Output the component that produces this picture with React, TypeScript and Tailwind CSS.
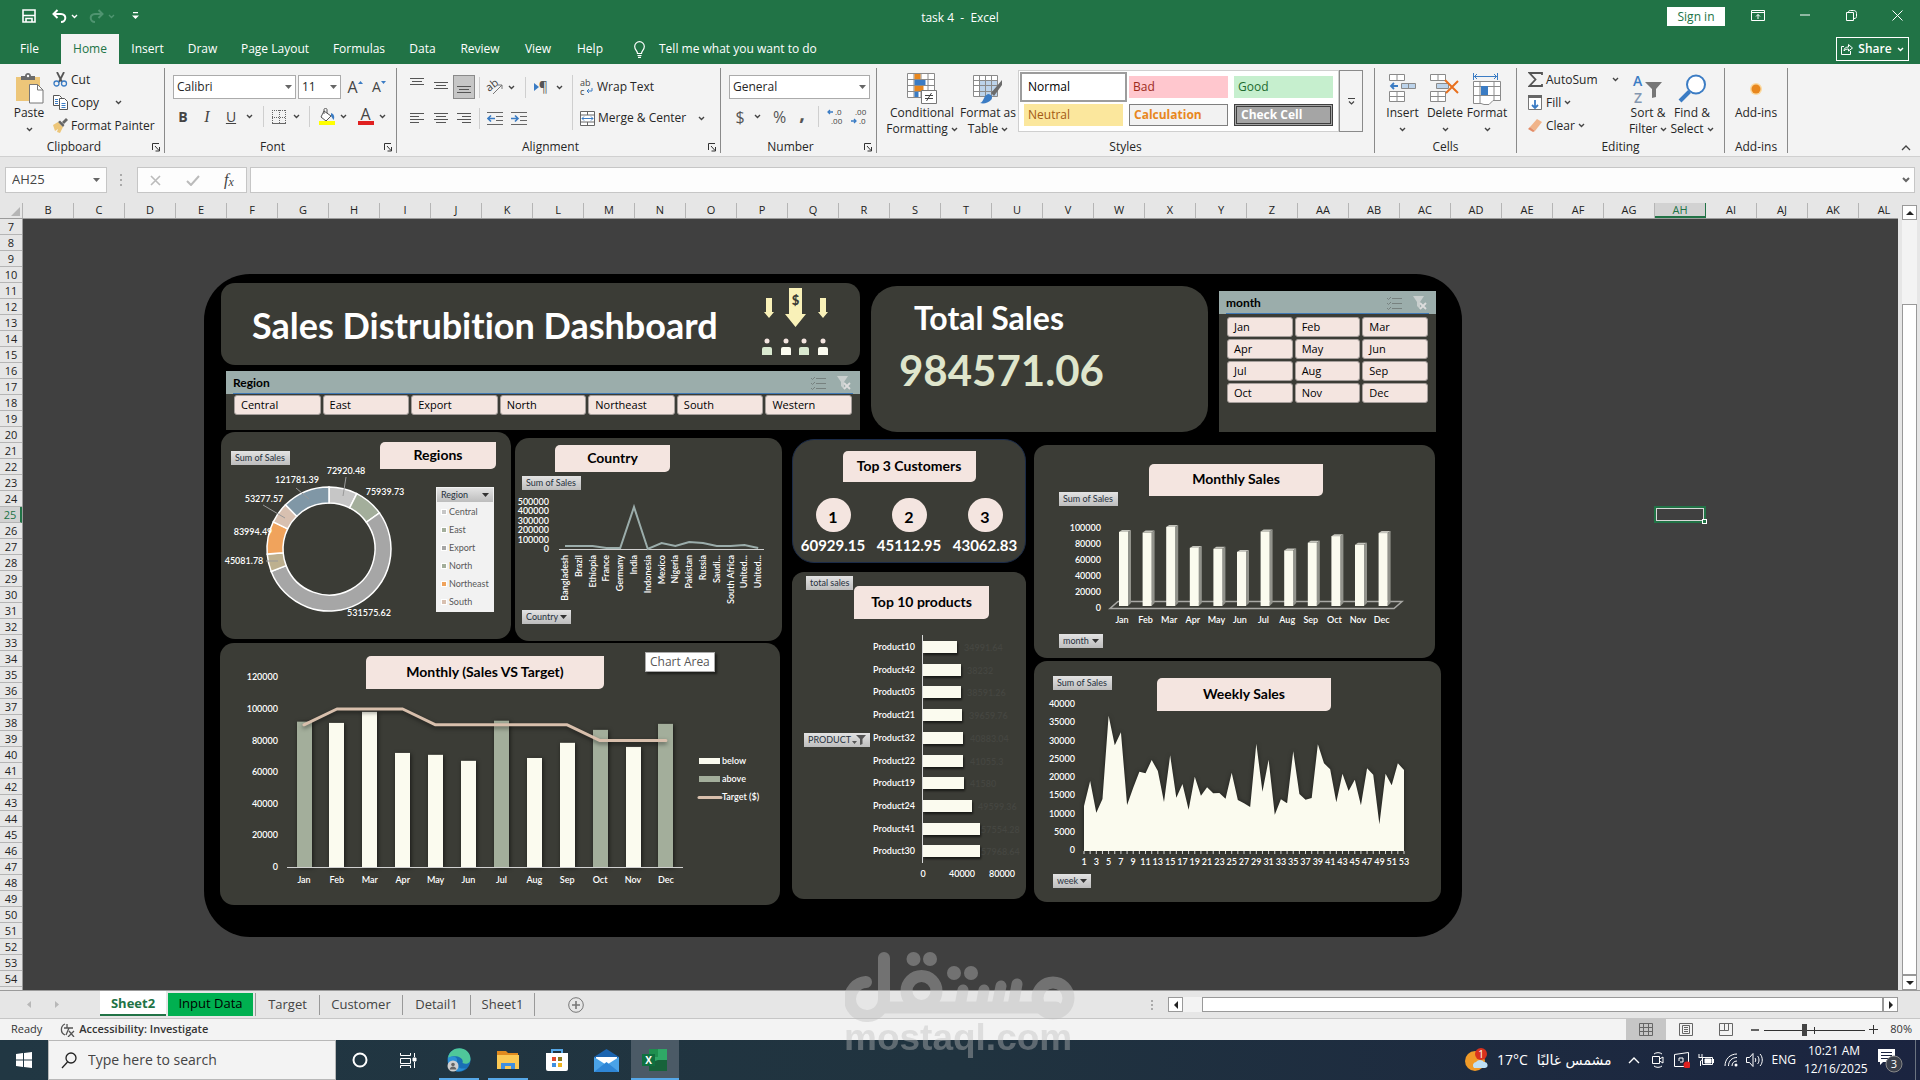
import React from "react";

type Kids = { children?: React.ReactNode };

const UI = "font-['Open_Sans','Noto_Sans',sans-serif]";
const CAL = "font-['Lato','Open_Sans',sans-serif] [font-variant-ligatures:none]";

/* ---------- small shared pieces ---------- */

function Chev({ color = "#444" }: { color?: string }) {
  return (
    <svg width="7" height="5" viewBox="0 0 7 5" className="shrink-0">
      <path d="M1 1l2.5 2.5L6 1" fill="none" stroke={color} strokeWidth="1.4" />
    </svg>
  );
}

function Tri({ color = "#666" }: { color?: string }) {
  return (
    <svg width="7" height="4" viewBox="0 0 7 4" className="shrink-0">
      <path d="M0 0h7L3.5 4z" fill={color} />
    </svg>
  );
}

function Btn({ label, className = "", children }: Kids & { label: string; className?: string }) {
  return (
    <button aria-label={label} className={`flex shrink-0 items-center justify-center ${className}`}>
      {children}
    </button>
  );
}

function Group({ title, width, launcher = false, children }: Kids & { title: string; width: string; launcher?: boolean }) {
  return (
    <section aria-label={title} className={`flex shrink-0 flex-col border-r border-[#8a8a8a] ${width}`}>
      <div className="h-[73px]">{children}</div>
      <div className="flex h-3 items-center text-center">
        <span className="flex-1 leading-3 whitespace-nowrap">{title}</span>
        {launcher && (
          <Btn label={`${title} settings`} className="w-4">
            <svg width="8" height="9" viewBox="0 0 8 9" fill="none" stroke="#333">
              <path d="M.5 7V.5H7M3 3l4 4.5M7.5 4v4H3.5" />
            </svg>
          </Btn>
        )}
      </div>
    </section>
  );
}

function Lines({ rows }: { rows: [number, number][] }) {
  return (
    <svg width="15" height="13" viewBox="0 0 15 13" stroke="#555" strokeWidth="1">
      {rows.map(([a, b], i) => (
        <path key={i} d={`M${a} ${i * 3 + 1.5}H${b}`} />
      ))}
    </svg>
  );
}

/* ---------- title bar & tabs ---------- */

function TitleBar() {
  return (
    <header className="grid h-[34px] grid-cols-[1fr_auto_1fr] bg-[#217346] text-white">
      <div className="flex items-start pl-[22px] pt-2">
        <Btn label="Save" className="h-4 w-[14px]">
          <svg width="14" height="14" viewBox="0 0 14 14" fill="none" stroke="#fff" strokeWidth="1.6">
            <path d="M1 1h12v12H1zM1 6.5h12M4 13V9.500h6V13" />
          </svg>
        </Btn>
        <Btn label="Undo" className="ml-[15px] h-4 w-4">
          <svg width="15" height="14" viewBox="0 0 15 14" fill="none" stroke="#fff" strokeWidth="2">
            <path d="M5.500 1L1.500 5l4 4M2 5h7c6 0 5.500 8 0 8" />
          </svg>
        </Btn>
        <Btn label="Undo history" className="ml-px h-4 w-3"><Chev color="#fff" /></Btn>
        <Btn label="Redo" className="ml-2 h-4 w-4">
          <svg width="15" height="14" viewBox="0 0 15 14" fill="none" stroke="#4f9470" strokeWidth="2">
            <path d="M9.500 1l4 4-4 4M13 5H6c-6 0-5.500 8 0 8" />
          </svg>
        </Btn>
        <Btn label="Redo history" className="ml-px h-4 w-3"><Chev color="#4f9470" /></Btn>
        <Btn label="Customize toolbar" className="ml-3 h-4 w-3">
          <svg width="7" height="8" viewBox="0 0 7 8" fill="#fff"><path d="M1 0h5v1.300H1zM0 3.500h7L3.500 7z" /></svg>
        </Btn>
      </div>
      <h1 className="pt-2 text-xs leading-5 whitespace-pre">task 4  -  Excel</h1>
      <div className="flex items-start justify-end">
        <button className="mt-[7px] h-[19px] w-[58px] bg-white text-xs leading-[19px] text-[#217346]">Sign in</button>
        <Btn label="Ribbon display options" className="ml-[18px] h-[30px] w-[30px]">
          <svg width="14" height="11" viewBox="0 0 14 11" fill="none" stroke="#fff">
            <path d="M.5.500h13v10H.5zM.5 2.500h13M7 9V4.500M5 6.500l2-2 2 2" />
          </svg>
        </Btn>
        <Btn label="Minimize" className="ml-[17px] h-[30px] w-[30px]">
          <svg width="10" height="2"><path d="M0 1h10" stroke="#fff" /></svg>
        </Btn>
        <Btn label="Restore" className="ml-4 h-[30px] w-[30px]">
          <svg width="11" height="11" viewBox="0 0 11 11" fill="none" stroke="#fff">
            <path d="M.5 2.500h7v8h-7zM2.500 2.500c0-1.500.5-2 2-2h3c2 0 3 1 3 3v3c0 1.500-1 2-2.500 2" />
          </svg>
        </Btn>
        <Btn label="Close" className="ml-4 mr-2 h-[30px] w-[30px]">
          <svg width="11" height="11" viewBox="0 0 11 11" stroke="#fff"><path d="M.5.500l10 10M10.500.500l-10 10" /></svg>
        </Btn>
      </div>
    </header>
  );
}

const TABS: [string, string][] = [
  ["File", "w-[59px] mr-[2px]"], ["Home", "w-[58px] bg-[#f3f3f3] text-[#217346]"], ["Insert", "w-[57px]"], ["Draw", "w-[53px]"],
  ["Page Layout", "w-[92px]"], ["Formulas", "w-[76px]"], ["Data", "w-[51px]"], ["Review", "w-[64px]"],
  ["View", "w-[52px]"], ["Help", "w-[52px]"],
];

function Tabs() {
  return (
    <nav className="flex h-[30px] items-stretch bg-[#217346] text-xs text-white">
      {TABS.map(([t, c]) => (
        <button key={t} className={`shrink-0 ${c}`}>{t}</button>
      ))}
      <button className="ml-[18px] flex items-center gap-[14px]">
        <svg width="11" height="17" viewBox="0 0 11 17" fill="none" stroke="#fff" strokeWidth="1.200">
          <path d="M3.500 12.500c0-3-2.800-3.500-2.800-7a4.800 4.800 0 0 1 9.600 0c0 3.500-2.800 4-2.800 7zM3.500 14.500h4M4 16.300h3" />
        </svg>
        <span>Tell me what you want to do</span>
      </button>
      <button className="mr-[11px] mb-[3px] mt-[3px] ml-auto flex w-[73px] items-center justify-between border border-white px-1 font-semibold">
        <svg width="12" height="12" viewBox="0 0 12 12" fill="none" stroke="#fff">
          <path d="M3 3.500H.5v8h9V8M3 8c0-3 2-4 4.500-4V1.500L11.500 5 7.500 8V6C5.500 6 4 6.500 3 8z" />
        </svg>
        Share
        <Chev color="#fff" />
      </button>
    </nav>
  );
}

/* ---------- ribbon ---------- */

function PasteIcon() {
  return (
    <svg width="29" height="31" viewBox="0 0 29 31">
      <path d="M1 4h24v24H1z" fill="#edc679" />
      <path d="M6 3h4c0-4 6-4 6 0h4v4H6z" fill="#6b6b6b" /><circle cx="13" cy="3" r="1.200" fill="#fff" />
      <path d="M14.500 11.500h8l5.500 5.500v13H14.500z" fill="#fff" stroke="#777" /><path d="M22.500 11.500V17H28" fill="none" stroke="#777" />
    </svg>
  );
}

function BigButton({ label, lines, className = "", inline = false, children }: Kids & { label: string; lines: string[]; className?: string; inline?: boolean }) {
  return (
    <button aria-label={label} className={`flex shrink-0 flex-col items-center leading-4 ${className}`}>
      <span className="flex h-[33px] items-center justify-center">{children}</span>
      {lines.map((l, i) => (
        <span key={l} className="flex items-center gap-[3px] whitespace-nowrap">
          {l}
          {inline && i === lines.length - 1 && <Chev />}
        </span>
      ))}
      {!inline && label !== "Add-ins" && <span className="flex h-4 items-center"><Chev /></span>}
    </button>
  );
}

function Clipboard() {
  return (
    <Group title="Clipboard" width="w-[165px]" launcher>
      <div className="flex">
        <BigButton label="Paste" lines={["Paste"]} className="ml-2 mt-1 w-[42px]"><PasteIcon /></BigButton>
        <div className="ml-[3px] flex flex-col">
          <button className="flex h-[23px] items-center gap-[3px]">
            <svg width="15" height="15" viewBox="0 0 15 15" fill="none">
              <path d="M4 0l5 10M11 0L6 10" stroke="#555" strokeWidth="1.800" />
              <circle cx="3.500" cy="11.500" r="2.500" stroke="#3b7cc4" strokeWidth="1.300" /><circle cx="11" cy="11.500" r="2.500" stroke="#3b7cc4" strokeWidth="1.300" />
            </svg>
            Cut
          </button>
          <button className="flex h-[23px] items-center gap-[3px]">
            <svg width="15" height="15" viewBox="0 0 15 15" fill="#fff" stroke="#555">
              <path d="M.5.500h6l2 2v8h-8z" /><path d="M6.500 3.500h5l3 3v8h-8z" /><path d="M2 4.500h3M2 6.500h3M2 8.500h3M8.500 8.500h4M8.500 10.500h4M8.500 12.500h4" stroke="#3b7cc4" />
            </svg>
            Copy
            <span className="ml-[13px]"><Chev /></span>
          </button>
          <button className="flex h-[23px] items-center gap-[3px] whitespace-nowrap">
            <svg width="15" height="15" viewBox="0 0 15 15">
              <path d="M0 7l5-3 5 5-3 6-3-1 1-3-3 2z" fill="#edc679" /><path d="M5 4l2-1.500L11.500 7 10 9zM9 4l4-4 2 2-4 4z" fill="#666" />
            </svg>
            Format Painter
          </button>
        </div>
      </div>
    </Group>
  );
}

function Sep() {
  return <span className="block h-[21px] w-px shrink-0 bg-[#cfcfcf]" />;
}

function FontGroup() {
  return (
    <Group title="Font" width="w-[232px]" launcher>
      <div className="flex flex-col pl-2 pt-[7px]">
        <div className="flex items-center">
          <button aria-label="Font name" className="flex h-6 w-[123px] items-center justify-between border border-[#ababab] bg-white px-[3px] text-xs">Calibri<Tri /></button>
          <button aria-label="Font size" className="ml-[2px] flex h-6 w-[43px] items-center justify-between border border-[#ababab] bg-white px-[3px] text-xs">11<Tri /></button>
          <Btn label="Increase font size" className="ml-[6px] w-4 text-base text-[#444]">A<svg width="5" height="12" viewBox="0 0 5 12"><path d="M0 3l2.500-3L5 3z" fill="#3b7cc4" /></svg></Btn>
          <Btn label="Decrease font size" className="ml-2 w-4 text-sm text-[#444]">A<svg width="5" height="12" viewBox="0 0 5 12"><path d="M0 0h5L2.500 3z" fill="#3b7cc4" /></svg></Btn>
        </div>
        <div className="mt-[7px] flex h-[21px] items-center text-sm text-[#444]">
          <Btn label="Bold" className="w-5 font-bold">B</Btn>
          <Btn label="Italic" className="ml-1 w-5 font-['Liberation_Serif',serif] text-base italic">I</Btn>
          <Btn label="Underline" className="ml-1 w-5 underline">U</Btn>
          <Btn label="Underline style" className="w-4"><Chev /></Btn>
          <span className="ml-[6px]"><Sep /></span>
          <Btn label="Borders" className="ml-[7px] w-[15px]">
            <svg width="14" height="14" viewBox="0 0 14 14" stroke="#666" strokeDasharray="1 1"><path d="M.5 0v14M13.500 0v14M7.500 0v14M0 .500h14M0 7.500h14" /><path d="M0 13.500h14" strokeDasharray="none" /></svg>
          </Btn>
          <Btn label="Border style" className="ml-[2px] w-4"><Chev /></Btn>
          <span className="ml-[5px]"><Sep /></span>
          <Btn label="Fill color" className="ml-2 w-[17px]">
            <svg width="16" height="17" viewBox="0 0 16 17"><path d="M5 3l7 5-5 5-5-4z" fill="#fff" stroke="#555" /><path d="M5 6V1.500c0-1.500 3-1.500 3 0V5" fill="none" stroke="#555" /><path d="M12 5c3 1 4 4 2.500 7L12 8z" fill="#3b7cc4" /><path d="M0 13h16v4H0z" fill="#ff0" /></svg>
          </Btn>
          <Btn label="Fill colors" className="w-4"><Chev /></Btn>
          <Btn label="Font color" className="ml-[6px] w-[17px]">
            <span className="flex flex-col items-center leading-[13px] text-base">A<span className="h-1 w-4 bg-[#e02020]" /></span>
          </Btn>
          <Btn label="Font colors" className="w-4"><Chev /></Btn>
        </div>
      </div>
    </Group>
  );
}

function AlignmentGroup() {
  return (
    <Group title="Alignment" width="w-[324px]" launcher>
      <div className="flex pl-2 pt-[7px]">
        <div className="w-[167px] shrink-0">
          <div className="flex h-6 items-center">
            <Btn label="Top align" className="w-6 pb-2"><Lines rows={[[0, 14], [2, 12], [0, 14]]} /></Btn>
            <Btn label="Middle align" className="w-6"><Lines rows={[[0, 14], [2, 12], [0, 14]]} /></Btn>
            <Btn label="Bottom align" className="h-6 w-[22px] border border-[#8a8a8a] bg-[#c6c6c6] pt-2"><Lines rows={[[0, 14], [2, 12], [0, 14]]} /></Btn>
            <span className="ml-1"><Sep /></span>
            <Btn label="Orientation" className="ml-[7px] w-4">
              <svg width="17" height="16" viewBox="0 0 17 16" className="overflow-visible"><text x="0" y="11" fontSize="11" fill="#444" transform="rotate(-38 4 9)">ab</text><path d="M6 15L15 6M11 6h4v4" stroke="#777" fill="none" /></svg>
            </Btn>
            <Btn label="Orientation options" className="w-4"><Chev /></Btn>
            <span className="ml-[6px]"><Sep /></span>
            <Btn label="Text direction" className="ml-2 w-[14px] text-sm text-[#555]"><svg width="5" height="8"><path d="M0 0v8l5-4z" fill="#3b7cc4" /></svg>¶</Btn>
            <Btn label="Direction options" className="ml-[3px] w-4"><Chev /></Btn>
          </div>
          <div className="mt-[7px] flex h-6 items-center">
            <Btn label="Align left" className="w-6"><Lines rows={[[0, 14], [0, 9], [0, 14], [0, 9]]} /></Btn>
            <Btn label="Center" className="w-6"><Lines rows={[[0, 14], [2, 12], [0, 14], [2, 12]]} /></Btn>
            <Btn label="Align right" className="w-[22px]"><Lines rows={[[0, 14], [5, 14], [0, 14], [5, 14]]} /></Btn>
            <span className="ml-1"><Sep /></span>
            <Btn label="Decrease indent" className="ml-[7px] w-4">
              <svg width="16" height="13" viewBox="0 0 16 13" fill="none" stroke="#666"><path d="M0 .500h16M9 4.500h7M9 8.500h7M0 12.500h16" /><path d="M8 6.500H1M4 3.500l-3 3 3 3" stroke="#3b7cc4" strokeWidth="1.600" /></svg>
            </Btn>
            <Btn label="Increase indent" className="ml-2 w-4">
              <svg width="16" height="13" viewBox="0 0 16 13" fill="none" stroke="#666"><path d="M0 .500h16M9 4.500h7M9 8.500h7M0 12.500h16" /><path d="M0 6.500h7M4 3.500l3 3-3 3" stroke="#3b7cc4" strokeWidth="1.600" /></svg>
            </Btn>
          </div>
        </div>
        <div className="flex flex-1 flex-col gap-[7px] border-l border-[#cfcfcf] pl-[7px]">
          <button className="flex h-6 items-center gap-[3px]">
            <svg width="14" height="18" viewBox="0 0 14 18" className="overflow-visible text-[9px] leading-none"><text x="0" y="8" fill="#444">ab</text><text x="0" y="17" fill="#444">c</text><path d="M12 10v3H7M9 11l-2 2 2 2" stroke="#3b7cc4" fill="none" /></svg>
            Wrap Text
          </button>
          <button className="flex h-6 items-center gap-[3px] whitespace-nowrap">
            <svg width="15" height="15" viewBox="0 0 15 15" fill="#fff" stroke="#666"><path d="M.5.500h14v14H.5zM.5 4h14M.5 11h14M7.500.500V4M7.500 11v3.500" /><path d="M2 7.500h11M4 5.500l-2 2 2 2M11 5.500l2 2-2 2" stroke="#3b7cc4" fill="none" /></svg>
            Merge &amp; Center
            <span className="ml-[9px]"><Chev /></span>
          </button>
        </div>
      </div>
    </Group>
  );
}

function DecIcon({ inc }: { inc: boolean }) {
  return (
    <svg width="15" height="17" viewBox="0 0 15 17" className="overflow-visible text-[8px]" fill="#444">
      <text x={inc ? 8 : 4} y="7">{inc ? ".0" : ".00"}</text>
      <text x={inc ? 4 : 8} y="16">{inc ? ".00" : ".0"}</text>
      <path d={inc ? "M6 4H1M3 2L1 4l2 2" : "M0 13h5M3 11l2 2-2 2"} stroke="#3b7cc4" fill="none" strokeWidth="1.300" />
    </svg>
  );
}

function NumberGroup() {
  return (
    <Group title="Number" width="w-[156px]" launcher>
      <div className="pl-2 pt-[7px]">
        <button aria-label="Number format" className="flex h-6 w-[141px] items-center justify-between border border-[#ababab] bg-white px-[3px]">General<Tri /></button>
        <div className="mt-[7px] flex h-[21px] items-center text-base text-[#555]">
          <Btn label="Accounting" className="ml-[5px] w-3">$</Btn>
          <Btn label="Accounting options" className="ml-[3px] w-4"><Chev /></Btn>
          <Btn label="Percent" className="ml-[7px] w-[15px]">%</Btn>
          <Btn label="Comma style" className="ml-[9px] w-3 pb-2 text-xl font-bold">,</Btn>
          <span className="ml-[10px]"><Sep /></span>
          <Btn label="Increase decimal" className="ml-[7px] w-4"><DecIcon inc /></Btn>
          <Btn label="Decrease decimal" className="ml-2 w-4"><DecIcon inc={false} /></Btn>
        </div>
      </div>
    </Group>
  );
}

const STYLES: [string, string][] = [
  ["Normal", "bg-white text-black outline-2 outline-[#9c9c9c] outline-offset-2"],
  ["Bad", "bg-[#ffc7ce] text-[#9c2a1a]"],
  ["Good", "bg-[#c6efce] text-[#1d6b2f]"],
  ["Neutral", "bg-[#fbe79d] text-[#a35a14]"],
  ["Calculation", "border border-[#7f7f7f] bg-[#f2f2f2] font-bold text-[#e8871e]"],
  ["Check Cell", "border-3 border-double border-[#3f3f3f] bg-[#a5a5a5] font-bold text-white"],
];

function StylesGroup() {
  return (
    <Group title="Styles" width="w-[498px]">
      <div className="flex pt-[2px]">
        <BigButton label="Conditional Formatting" lines={["Conditional", "Formatting"]} inline className="ml-[7px] mt-[2px] w-[76px]">
          <svg width="30" height="31" viewBox="0 0 30 31">
            <path d="M.5.500h27v24H.5zM7 .500v24M14 .500v24M21 .500v24M.5 6.500h27M.5 12.500h27M.5 18.500h27" fill="#fff" stroke="#8a8a8a" />
            <path d="M7.500 1h6v5h-6zM7.500 13h9v5h-9z" fill="#e8871e" /><path d="M7.500 7h11v5h-11zM7.500 19h4v5h-4z" fill="#3b7cc4" />
            <path d="M14.500 17.500h15v13h-15z" fill="#fff" stroke="#777" /><path d="M18 22.500h8M18 25.500h8M24.500 20l-5 8" stroke="#444" />
          </svg>
        </BigButton>
        <BigButton label="Format as Table" lines={["Format as", "Table"]} inline className="mt-[2px] w-[56px]">
          <svg width="30" height="31" viewBox="0 0 30 31">
            <path d="M.5 2.500h24v21H.5z" fill="#fff" stroke="#8a8a8a" /><path d="M7 8h17v15H7z" fill="#bcd3ea" />
            <path d="M6.500 2.500v21M12.500 2.500v21M18.500 2.500v21M.5 7.500h24M.5 12.500h24M.5 18.500h24" stroke="#8a8a8a" />
            <path d="M29 7L18 20l3 3 8-11z" fill="#6b6b6b" /><path d="M7 30c4-1 3-7 8-9 4 0 5 4 3 6-3 3-7 4-11 3z" fill="#3b7cc4" />
          </svg>
        </BigButton>
        <div className="ml-[2px] grid h-[62px] flex-1 grid-cols-3 content-center gap-x-[6px] gap-y-[6px] border border-[#cfcfcf] bg-white px-[5px]">
          {STYLES.map(([n, c]) => (
            <button key={n} className={`flex h-[22px] items-center px-1 ${c}`}>{n}</button>
          ))}
        </div>
        <Btn label="More styles" className="mr-[11px] h-[62px] w-6 border border-[#8a8a8a]">
          <svg width="7" height="7" viewBox="0 0 7 7"><path d="M0 .500h7M1 3.500L3.500 6 6 3.500" fill="none" stroke="#444" strokeWidth="1.200" /></svg>
        </Btn>
      </div>
    </Group>
  );
}

function CellsGroup() {
  return (
    <Group title="Cells" width="w-[142px]">
      <div className="flex pl-[6px] pt-1">
        <BigButton label="Insert" lines={["Insert"]} className="w-[43px]">
          <svg width="27" height="29" viewBox="0 0 27 29" fill="#fff" stroke="#8a8a8a">
            <path d="M.5.500h15v6H.5zM8 .500v6M.5 17.500h15v10H.5zM8 17.500v10M.5 22.500h15" /><path d="M12.500 9.500h14v5h-14zM19.500 9.500v5" fill="#bcd3ea" /><path d="M9 12H2M5 9l-3 3 3 3" stroke="#3b7cc4" strokeWidth="1.800" fill="none" />
          </svg>
        </BigButton>
        <BigButton label="Delete" lines={["Delete"]} className="w-[42px]">
          <svg width="30" height="29" viewBox="0 0 30 29" fill="#fff" stroke="#8a8a8a">
            <path d="M.5.500h15v6H.5zM8 .500v6M.5 17.500h15v10H.5zM8 17.500v10M.5 22.500h15" /><path d="M6.500 9.500h12v5h-12z" fill="#bcd3ea" /><path d="M15 6l13 13M28 7L16 19" stroke="#e8701e" strokeWidth="2" />
          </svg>
        </BigButton>
        <BigButton label="Format" lines={["Format"]} className="w-[42px]">
          <svg width="29" height="32" viewBox="0 0 29 32" fill="#fff" stroke="#8a8a8a">
            <path d="M.5 8.500h27v19H20l-4 4h-5l-3-1H.500zM7 8.500v22M21 8.500v19M.5 13.500h27M.5 22.500h27" /><path d="M8 13h7v9H8z" fill="#3b7cc4" stroke="none" /><path d="M1 3.500h23M4 1L1.500 3.500 4 6M21 1l2.500 2.500L21 6M.5 0v7M24.500 0v7" stroke="#3b7cc4" fill="none" />
          </svg>
        </BigButton>
      </div>
    </Group>
  );
}

function EditingGroup() {
  return (
    <Group title="Editing" width="w-[208px]">
      <div className="flex pl-[11px]">
        <div className="flex w-[99px] shrink-0 flex-col">
          <button className="flex h-[23px] items-center gap-[3px]">
            <svg width="15" height="15" viewBox="0 0 15 15" fill="none" stroke="#555" strokeWidth="1.800"><path d="M14 3V1H1.500l6 6.500-6 6.500H14v-2" /></svg>
            AutoSum<span className="ml-auto mr-2"><Chev /></span>
          </button>
          <button className="flex h-[23px] items-center gap-[3px]">
            <svg width="15" height="15" viewBox="0 0 15 15"><path d="M.5.500h13v14H.5z" fill="#fff" stroke="#777" /><path d="M0 0h14v3H0z" fill="#666" /><path d="M7 5v8M4 10l3 3 3-3" stroke="#3b7cc4" strokeWidth="1.800" fill="none" /></svg>
            Fill<Chev />
          </button>
          <button className="flex h-[23px] items-center gap-[3px]">
            <svg width="15" height="15" viewBox="0 0 15 15"><path d="M9 1l5 3-7 9-5-4z" fill="#f0b48a" /><path d="M2 9l5 4-2 1-5-3z" fill="#e48c66" /></svg>
            Clear<Chev />
          </button>
        </div>
        <BigButton label="Sort & Filter" lines={["Sort &", "Filter"]} inline className="mt-1 w-[42px]">
          <svg width="30" height="32" viewBox="0 0 30 32" className="overflow-visible text-sm font-semibold"><text x="0" y="13" fill="#3b7cc4">A</text><text x="1" y="30" fill="#8497b0">Z</text><path d="M12 9h17l-6 7v8l-4 1v-9z" fill="#777" /></svg>
        </BigButton>
        <BigButton label="Find & Select" lines={["Find &", "Select"]} inline className="mt-1 w-[46px]">
          <svg width="29" height="29" viewBox="0 0 29 29" fill="none" stroke="#3b7cc4"><circle cx="18" cy="10.500" r="9" strokeWidth="2" fill="#fff" /><path d="M11.500 17.500L2 27" strokeWidth="4" /></svg>
        </BigButton>
      </div>
    </Group>
  );
}

function Ribbon() {
  return (
    <div className="flex h-[93px] items-start border-b border-[#d0d0d0] bg-[#f3f3f3] pt-1 text-xs text-[#262626]">
      <Clipboard />
      <FontGroup />
      <AlignmentGroup />
      <NumberGroup />
      <StylesGroup />
      <CellsGroup />
      <EditingGroup />
      <Group title="Add-ins" width="w-[63px]">
        <BigButton label="Add-ins" lines={["Add-ins"]} className="mx-auto mt-1">
          <svg width="14" height="14" viewBox="0 0 14 14"><circle cx="7" cy="7" r="6" fill="#fbd9a0" /><circle cx="7" cy="7" r="4.500" fill="#e8871e" /></svg>
        </BigButton>
      </Group>
      <Btn label="Collapse ribbon" className="ml-auto mr-2 mt-[72px] h-4 w-3">
        <svg width="10" height="6" viewBox="0 0 10 6"><path d="M1 5l4-4 4 4" fill="none" stroke="#444" strokeWidth="1.300" /></svg>
      </Btn>
    </div>
  );
}

function FormulaBar() {
  return (
    <div className="flex h-[46px] items-start bg-[#e6e6e6] pt-[10px] pl-[5px] text-[#444]">
      <div className="flex h-[26px] w-[102px] shrink-0 items-center justify-between border border-[#c6c6c6] bg-[#fdfdfd] px-[6px] text-[13px]">
        <input aria-label="Name box" defaultValue="AH25" className="w-16 bg-transparent outline-none" />
        <Tri />
      </div>
      <span className="mx-[13px] flex h-[26px] flex-col items-center justify-center gap-[3px]">
        <i className="h-[2px] w-[2px] bg-[#aaa]" /><i className="h-[2px] w-[2px] bg-[#aaa]" /><i className="h-[2px] w-[2px] bg-[#aaa]" />
      </span>
      <div className="ml-[2px] flex h-[26px] w-[110px] shrink-0 items-center justify-around border border-[#c6c6c6] bg-[#fdfdfd]">
        <Btn label="Cancel"><svg width="11" height="11"><path d="M1 1l9 9M10 1l-9 9" stroke="#bbb" strokeWidth="1.600" /></svg></Btn>
        <Btn label="Enter"><svg width="14" height="11"><path d="M1 6l4 4 8-9" stroke="#bbb" strokeWidth="2" fill="none" /></svg></Btn>
        <Btn label="Insert function" className="font-['Liberation_Serif',serif] text-base leading-5 italic text-[#444]">f<span className="pt-1 text-xs">x</span></Btn>
      </div>
      <div className="mr-[5px] ml-[3px] flex h-[26px] flex-1 items-center border border-[#c6c6c6] bg-[#fdfdfd] pr-1">
        <input aria-label="Formula bar" className="flex-1 bg-transparent px-1 text-[13px] outline-none" />
        <svg width="8" height="6" viewBox="0 0 8 6"><path d="M1 1l3 3 3-3" fill="none" stroke="#666" strokeWidth="2" /></svg>
      </div>
    </div>
  );
}

/* ---------- dashboard ---------- */

const PANEL = "relative shrink-0 bg-[#3b3c36]";

function Pill({ className, children }: Kids & { className: string }) {
  return (
    <h3 className={`flex items-center justify-center rounded-tl-[5px] rounded-br-[5px] bg-[#f4e5e0] pb-[2px] text-sm font-bold text-black ${className}`}>
      {children}
    </h3>
  );
}

function Field({ className, arrow = false, children }: Kids & { className: string; arrow?: boolean }) {
  return (
    <button className={`flex h-[14px] items-center justify-between bg-linear-to-b from-[#e3e3e3] to-[#bdbdbd] px-1 text-[9px] leading-[14px] whitespace-nowrap text-[#26303c] ${className}`}>
      {children}
      {arrow && <Tri color="#333" />}
    </button>
  );
}

function Slicer({ title, items, cols, className }: { title: string; items: string[]; cols: string; className: string }) {
  return (
    <section aria-label={title} className={`shrink-0 bg-[#3b3c36] ${className}`}>
      <div className="flex h-[23px] items-end bg-[#9badab] px-[7px]">
        <div className="flex h-[21px] flex-1 items-center border-b border-[#3f78b5]">
          <h3 className={`text-xs font-bold text-black ${CAL}`}>{title}</h3>
          <Btn label="Multi-select" className="ml-auto">
            <svg width="15" height="14" viewBox="0 0 15 14" fill="none" stroke="#77817f"><path d="M5 2.500h10M5 7.500h10M5 12.500h10M0 2l1.500 1.500L4 1M0 7l1.500 1.500L4 6M0 12l1.500 1.500L4 11" /></svg>
          </Btn>
          <Btn label="Clear filter" className="ml-[10px] mr-[2px]">
            <svg width="15" height="14" viewBox="0 0 15 14" fill="#c9cfce"><path d="M1 0h11L8 6v7L5 10V6z" /><path d="M8 7l6 6M14 7l-6 6" stroke="#dcdcdc" strokeWidth="1.800" /></svg>
          </Btn>
        </div>
      </div>
      <div className={`grid gap-[2px] px-2 ${cols}`}>
        {items.map((m) => (
          <button key={m} className={`h-5 rounded-[3px] border border-[#a59e9b] bg-[#f4e5e0] px-[6px] text-left text-[11px] leading-[18px] text-black ${UI}`}>{m}</button>
        ))}
      </div>
    </section>
  );
}

const MONTHS = ["Jan", "Feb", "Mar", "Apr", "May", "Jun", "Jul", "Aug", "Sep", "Oct", "Nov", "Dec"];
const SALES = [92000, 91200, 98200, 72200, 71000, 67200, 92600, 69000, 78600, 86800, 76000, 90600];
const TARGET = [90000, 100000, 100000, 100000, 90000, 90000, 90000, 90000, 90000, 80000, 80000, 80000];

function Axis({ x, ys, labels }: { x: number; ys: number[]; labels: string[] }) {
  return (
    <g textAnchor="end">
      {labels.map((l, i) => (
        <text key={i} x={x} y={ys[i]}>{l}</text>
      ))}
    </g>
  );
}

const CHART = "block fill-white text-[9px] font-['Lato','Open_Sans',sans-serif] font-semibold";

const SLICES: [number, string][] = [
  [72920.48, "#c6c6c6"], [75939.73, "#a3ae9b"], [531575.62, "#a6a6a6"], [45081.78, "#bdb08f"],
  [83994.49, "#f0a35c"], [53277.57, "#d8c0b0"], [121781.39, "#8097a6"],
];
const SLICE_LABELS: [number, number, string][] = [
  [346, 474, "72920.48"], [297, 483, "121781.39"], [264, 502, "53277.57"], [385, 495, "75939.73"],
  [253, 535, "83994.49"], [244, 564, "45081.78"], [369, 616, "531575.62"],
];

function RegionsPanel() {
  const total = SLICES.reduce((s, [v]) => s + v, 0);
  const cx = 329, cy = 549, R = 62, r = 46;
  let a = -Math.PI / 2;
  return (
    <section className={`${PANEL} rounded-[14px]`}>
      <svg width="290" height="207" viewBox="221 432 290 207" className={CHART}>
        {SLICES.map(([v, c], i) => {
          const b = a + (v / total) * Math.PI * 2;
          const big = b - a > Math.PI ? 1 : 0;
          const p = (k: number, t: number) => `${cx + k * Math.cos(t)} ${cy + k * Math.sin(t)}`;
          const d = `M${p(R, a)}A${R} ${R} 0 ${big} 1 ${p(R, b)}L${p(r, b)}A${r} ${r} 0 ${big} 0 ${p(r, a)}Z`;
          a = b;
          return <path key={i} d={d} fill={c} stroke="#fff" strokeWidth="1.500" />;
        })}
        <path d="M346 477l-3 19M296 488l13 11M263 505l22 13M266 561h12" stroke="#999" fill="none" />
        {SLICE_LABELS.map(([x, y, t]) => (
          <text key={t} x={x} y={y} textAnchor="middle">{t}</text>
        ))}
      </svg>
      <Pill className="absolute left-[159px] top-[10px] h-[27px] w-[116px]">Regions</Pill>
      <Field className="absolute left-[10px] top-[19px] w-[59px]">Sum of Sales</Field>
      <div className="absolute left-[215px] top-[55px] w-[58px] bg-[#f2f2f2] p-px text-[9px] text-[#595959]">
        <Field arrow className="w-full">Region</Field>
        <ul className="pt-px">
          {[["Central", "bg-[#c6c6c6]"], ["East", "bg-[#a3ae9b]"], ["Export", "bg-[#a6a6a6]"], ["North", "bg-[#a3ae9b]"], ["Northeast", "bg-[#f0a35c]"], ["South", "bg-[#d8c0b0]"]].map(([n, c]) => (
            <li key={n} className="flex h-[18px] items-center gap-[2px] pl-[4px]">
              <i className={`h-[6px] w-[6px] shrink-0 border border-white ${c}`} />
              {n}
            </li>
          ))}
        </ul>
      </div>
    </section>
  );
}

const COUNTRIES = ["Bangladesh", "Brazil", "Ethiopia", "France", "Germany", "India", "Indonesia", "Mexico", "Nigeria", "Pakistan", "Russia", "Saudi...", "South Africa", "United...", "United..."];
const COUNTRY_Y = [546, 546, 546, 548, 548, 507, 549, 543, 546, 542, 543, 546, 546, 545, 548];

function CountryPanel() {
  const x = (i: number) => 565 + i * 13.8;
  return (
    <section className={`${PANEL} mt-[6px] rounded-[14px]`}>
      <svg width="267" height="203" viewBox="515 438 267 203" className={CHART}>
        <Axis x={549} ys={[505, 514, 524, 533, 543, 552]} labels={["500000", "400000", "300000", "200000", "100000", "0"]} />
        <path d="M559 549.500h205" stroke="#d0d0d0" />
        <polyline points={COUNTRY_Y.map((y, i) => `${x(i)},${y}`).join(" ")} fill="none" stroke="#9badab" strokeWidth="2" />
        {COUNTRIES.map((c, i) => (
          <text key={i} textAnchor="end" transform={`translate(${x(i) + 3} 555) rotate(-90)`}>{c}</text>
        ))}
      </svg>
      <Pill className="absolute left-[40px] top-[7px] h-[27px] w-[115px]">Country</Pill>
      <Field className="absolute left-[7px] top-[38px] w-[59px]">Sum of Sales</Field>
      <Field arrow className="absolute left-[7px] top-[172px] w-[49px]">Country</Field>
    </section>
  );
}

function TargetPanel() {
  const x = (i: number) => 304 + i * 32.9;
  const y = (v: number) => 867 - (v * 158) / 100000;
  const above = [0, 6, 9, 11];
  return (
    <section className={`${PANEL} rounded-[14px]`}>
      <svg width="560" height="262" viewBox="220 643 560 262" className={CHART}>
        <Axis x={278} ys={[680, 712, 744, 775, 807, 838, 870]} labels={["120000", "100000", "80000", "60000", "40000", "20000", "0"]} />
        <g className="drop-shadow-[1px_1px_2px_rgba(0,0,0,0.6)]">
          {SALES.map((v, i) => (
            <rect key={i} x={Math.round(x(i) - 7.5)} width="15" y={y(v)} height={867 - y(v)} fill={above.includes(i) ? "#a3ae9b" : "#fbfbef"} />
          ))}
        </g>
        <path d="M287 867.500h396" stroke="#d0d0d0" />
        <polyline className="drop-shadow-[0_2px_2px_rgba(0,0,0,0.5)]" points={TARGET.map((v, i) => `${x(i)},${y(v)}`).join(" ")} fill="none" stroke="#d8bfac" strokeWidth="3" strokeLinecap="round" strokeLinejoin="round" />
        <g textAnchor="middle">
          {MONTHS.map((m, i) => <text key={m} x={x(i)} y="883">{m}</text>)}
        </g>
        <rect x="699" y="758" width="21" height="6" fill="#fbfbef" /><rect x="699" y="776" width="21" height="6" fill="#a3ae9b" />
        <path d="M699 797.500h22" stroke="#d8bfac" strokeWidth="3" strokeLinecap="round" />
        <text x="722" y="764">below</text><text x="722" y="782">above</text><text x="722" y="800">Target ($)</text>
      </svg>
      <Pill className="absolute left-[146px] top-[13px] h-[33px] w-[238px]">Monthly (Sales VS Target)</Pill>
      <div className={`absolute left-[425px] top-[9px] border border-[#aaa] bg-white px-1 text-xs leading-[18px] whitespace-nowrap text-[#575757] shadow-[2px_2px_2px_rgba(0,0,0,0.5)] ${UI}`}>Chart Area</div>
    </section>
  );
}

function CustomersPanel() {
  const top: [string, string][] = [["1", "60929.15"], ["2", "45112.95"], ["3", "43062.83"]];
  return (
    <section className="flex h-[124px] shrink-0 flex-col items-center rounded-[22px] border border-[#1b2b48] bg-[#3b3c36] pt-[11px] text-white">
      <Pill className="h-[31px] w-[133px]">Top 3 Customers</Pill>
      <ol className="mt-4 grid w-full grid-cols-3 px-[2px]">
        {top.map(([n, v]) => (
          <li key={n} className="flex flex-col items-center">
            <span className="flex h-[34px] w-[35px] items-center justify-center rounded-full bg-[#f4e5e0] pt-1 text-base font-bold text-black">{n}</span>
            <span className="mt-[3px] text-[15px] leading-5 font-bold">{v}</span>
          </li>
        ))}
      </ol>
    </section>
  );
}

const PRODUCTS: [string, number, number, string][] = [
  ["Product10", 957, 964, "34991.64"], ["Product42", 961, 967, "38232"], ["Product05", 961, 967, "38591.26"], ["Product21", 962, 969, "39659.76"],
  ["Product32", 963, 970, "40883.04"], ["Product22", 963, 970, "41055.3"], ["Product19", 964, 970, "41580"], ["Product24", 972, 978, "49599.36"],
  ["Product41", 980, 981, "57554.28"], ["Product30", 980, 981, "57968.64"],
];

function ProductsPanel() {
  const y = (i: number) => Math.round(647 + i * 22.7);
  return (
    <section className={`${PANEL} rounded-[12px]`}>
      <svg width="234" height="327" viewBox="792 572 234 327" className={CHART}>
        {PRODUCTS.map(([n, end, lx, v], i) => (
          <g key={n}>
            <text x="915" y={y(i) + 3} textAnchor="end">{n}</text>
            <rect x="923" y={y(i) - 6} width={end - 923} height="12" fill="#fbfbef" className="drop-shadow-[1px_2px_1px_rgba(0,0,0,0.6)]" />
            <text x={lx} y={y(i) + 4} className="fill-[#454641]">{v}</text>
          </g>
        ))}
        <path d="M922.500 635v228" stroke="#d8d8d8" />
        <g textAnchor="middle"><text x="923" y="877">0</text><text x="962" y="877">40000</text><text x="1002" y="877">80000</text></g>
      </svg>
      <Field className="absolute left-[14px] top-[4px] w-[47px]">total sales</Field>
      <Pill className="absolute left-[62px] top-[14px] h-[33px] w-[135px]">Top 10 products</Pill>
      <Field className="absolute left-[12px] top-[161px] w-[66px]">
        PRODUCT
        <svg width="14" height="10" viewBox="0 0 14 10" fill="#444"><path d="M0 6h5L2.500 9zM4 0h10l-3.500 4v5L8 10V4z" fill="#555" /></svg>
      </Field>
    </section>
  );
}

function MonthlyPanel() {
  return (
    <section className={`${PANEL} w-[401px] rounded-[13px]`}>
      <svg width="401" height="213" viewBox="1034 445 401 213" className={CHART}>
        <Axis x={1101} ys={[531, 547, 563, 579, 595, 611]} labels={["100000", "80000", "60000", "40000", "20000", "0"]} />
        <path d="M1110 608.500h284l8-7h-284z" fill="none" stroke="#a8a8a4" strokeWidth="1.500" />
        {SALES.map((v, i) => {
          const x = 1119 + i * 23.6;
          const t = 606 - v * 0.000805;
          return (
            <g key={i}>
              <path d={`M${x} ${t}l3-2h9l-3 2z`} fill="#c4c4bc" />
              <path d={`M${x + 9} ${t}l3-2V603l-3 3z`} fill="#92938c" />
              <rect x={x} y={t} width="9" height={606 - t} fill="#fbfbef" />
              <text x={x + 3} y="623" textAnchor="middle">{MONTHS[i]}</text>
            </g>
          );
        })}
      </svg>
      <Pill className="absolute left-[115px] top-[19px] h-[32px] w-[174px]">Monthly Sales</Pill>
      <Field className="absolute left-[25px] top-[47px] w-[59px]">Sum of Sales</Field>
      <Field arrow className="absolute left-[25px] top-[189px] w-[44px]">month</Field>
    </section>
  );
}

const WEEKS = [
  1128, 1053, 1148, 1107, 857, 946, 907, 1125, 1073, 1025, 1030, 990, 1023, 1116, 976, 1103, 1062, 1139, 1040, 1097, 1072, 1090, 1089, 1106, 1028, 1110,
  1120, 1131, 941, 1085, 989, 1154, 1108, 1120, 964, 1092, 1109, 1104, 943, 1000, 1018, 1117, 1031, 1083, 1049, 1126, 1015, 1034, 1183, 1031, 1066, 1000, 1020,
];

function WeeklyPanel() {
  const x = (i: number) => 1084 + i * 6.154;
  return (
    <section className={`${PANEL} rounded-[13px]`}>
      <svg width="407" height="241" viewBox="1034 661 407 241" className={CHART}>
        <Axis x={1075} ys={[707, 725, 744, 762, 780, 798, 817, 835, 853]} labels={["40000", "35000", "30000", "25000", "20000", "15000", "10000", "5000", "0"]} />
        <polygon className="drop-shadow-[0_0_2px_rgba(0,0,0,0.5)]" fill="#fbfbef" points={`1084,851 ${WEEKS.map((v, i) => `${x(i)},${430 + v / 3}`).join(" ")} 1404,851`} />
        <path d={WEEKS.map((_, i) => `M${x(i)} 851v3`).join("")} stroke="#d8d8d8" />
        <g textAnchor="middle">
          {WEEKS.map((_, i) => (i % 2 === 0 ? <text key={i} x={x(i)} y="865">{i + 1}</text> : null))}
        </g>
      </svg>
      <Pill className="absolute left-[123px] top-[17px] h-[33px] w-[174px]">Weekly Sales</Pill>
      <Field className="absolute left-[19px] top-[15px] w-[59px]">Sum of Sales</Field>
      <Field arrow className="absolute left-[19px] top-[213px] w-[38px]">week</Field>
    </section>
  );
}

function DistributionArt() {
  return (
    <svg width="70" height="70" viewBox="760 287 70 70">
      <path d="M789 287h13v26h4l-10.500 13L785 313h4zM766 297h6v14h2l-5 6-5-6h2zM820 297h6v14h2l-5 6-5-6h2z" fill="#f9f1b8" />
      <text x="795.500" y="304" fontSize="13" fontWeight="900" textAnchor="middle" fill="#3b3c36">$</text>
      {[767, 786, 804, 823].map((x, i) => (
        <g key={x}>
          <circle cx={x} cy="340" r="2.500" fill="#f4e5e0" />
          <path d={`M${x - 5} 354v-6q0-2 2-2h6q2 0 2 2v6z`} fill={i % 2 ? "#fbfbef" : "#d9e8cf"} />
        </g>
      ))}
    </svg>
  );
}

function Dashboard() {
  return (
    <main className={`ml-[181px] mt-[55px] w-[1258px] shrink-0 self-start rounded-[46px] bg-black pr-5 pb-8 pl-4 pt-[9px] ${CAL}`}>
      <div className="flex items-start">
        <div className="ml-px w-[639px] shrink-0">
          <header className="flex h-[82px] items-center justify-between rounded-[14px] bg-[#3b3c36] pr-[30px] pb-[2px] pl-[31px]">
            <h2 className="pt-1 text-[36px] font-bold whitespace-nowrap text-white">Sales Distrubition Dashboard</h2>
            <DistributionArt />
          </header>
          <Slicer title="Region" className="ml-[5px] mt-[6px] h-[59px]" cols="grid-cols-7 pt-px" items={["Central", "East", "Export", "North", "Northeast", "South", "Western"]} />
        </div>
        <section className="ml-[11px] mt-[3px] h-[146px] w-[337px] shrink-0 rounded-[26px] bg-[#3b3c36] pl-7 pt-[14px] font-bold">
          <h2 className="pl-[15px] text-[32px] leading-9 text-white">Total Sales</h2>
          <p className="mt-2 text-[42px] leading-[52px] text-[#dfe5cc]">984571.06</p>
        </section>
        <Slicer title="month" className="ml-[11px] mt-[8px] h-[141px] w-[217px]" cols="grid-cols-3 pt-[3px]" items={MONTHS} />
      </div>
      <div className="flex items-start">
        <div className="flex flex-col">
          <div className="ml-px flex items-start gap-1">
            <RegionsPanel />
            <CountryPanel />
          </div>
          <div className="mt-[2px] flex"><TargetPanel /></div>
        </div>
        <div className="ml-[10px] mt-[7px] flex w-[234px] shrink-0 flex-col gap-[9px]">
          <CustomersPanel />
          <ProductsPanel />
        </div>
        <div className="ml-2 mt-[13px] flex flex-col gap-[3px]">
          <MonthlyPanel />
          <WeeklyPanel />
        </div>
      </div>
    </main>
  );
}

/* ---------- sheet ---------- */

const COLS = Array.from({ length: 37 }, (_, i) => {
  const n = i + 2;
  return n <= 26 ? String.fromCharCode(64 + n) : "A" + String.fromCharCode(64 + n - 26);
});
const ROWS = Array.from({ length: 49 }, (_, i) => i + 7);

function Sheet() {
  return (
    <div className="flex min-h-0 flex-1 bg-[#e6e6e6]">
      <div className="flex min-w-0 flex-1 flex-col">
        <div className="flex h-4 overflow-hidden border-b border-[#9b9b9b] text-[11px] leading-[14px] text-[#222]">
          <span className="flex w-[23px] shrink-0 items-end justify-end border-r border-[#b5b5b5] p-[2px]">
            <svg width="9" height="9"><path d="M9 0v9H0z" fill="#b5b5b5" /></svg>
          </span>
          {COLS.map((c) => (
            <span key={c} className={`w-[51px] shrink-0 border-r text-center ${c === "AH" ? "border-b-2 border-r-[#217346] border-b-[#217346] bg-[#d2d2d2] text-[#217346]" : "border-[#b5b5b5]"}`}>{c}</span>
          ))}
        </div>
        <div className="flex min-h-0 flex-1">
          <div className="w-[23px] shrink-0 overflow-hidden border-r border-[#9b9b9b] text-[11px] leading-[15px] text-[#222]">
            {ROWS.map((r) => (
              <div key={r} className={`h-4 border-b text-center ${r === 25 ? "border-r-2 border-[#b5b5b5] border-r-[#217346] bg-[#d2d2d2] text-[#217346]" : "border-[#b5b5b5]"}`}>{r}</div>
            ))}
          </div>
          <div className="relative flex min-w-0 flex-1 overflow-hidden bg-[#404040]">
            <Dashboard />
            <div className="absolute left-[1631px] top-[287px] h-[17px] w-[52px] border-2 border-[#217346]">
              <div className="h-full border border-[#d8d8d8]" />
              <i className="absolute -right-[3px] -bottom-[3px] h-[5px] w-[5px] border border-white bg-[#217346]" />
            </div>
          </div>
        </div>
      </div>
      <div className="flex w-[22px] shrink-0 flex-col pt-[2px] pl-1 pr-[3px]">
        <Btn label="Scroll up" className="h-[15px] border border-[#999] bg-white"><svg width="8" height="4"><path d="M0 4h8L4 0z" fill="#222" /></svg></Btn>
        <div className="h-[84px] bg-[#f3f3f3]" />
        <div className="flex-1 border border-[#999] bg-white" />
        <Btn label="Scroll down" className="h-[15px] border border-[#999] bg-white"><svg width="8" height="4"><path d="M0 0h8L4 4z" fill="#222" /></svg></Btn>
      </div>
    </div>
  );
}

function SheetTabs() {
  return (
    <div className="flex h-[29px] items-start border-t border-b border-t-[#9b9b9b] border-b-[#c6c6c6] bg-[#e6e6e6] text-[13px] text-[#444]">
      <Btn label="Previous sheet" className="ml-[26px] h-[26px] w-[6px]"><svg width="4" height="7"><path d="M4 0v7L0 3.500z" fill="#b8b8b8" /></svg></Btn>
      <Btn label="Next sheet" className="ml-[22px] h-[26px] w-[6px]"><svg width="4" height="7"><path d="M0 0v7l4-3.500z" fill="#b8b8b8" /></svg></Btn>
      <nav className="ml-10 flex h-[25px] items-stretch">
        <button className="w-[66px] border-b-2 border-[#217346] bg-white pt-[2px] font-bold text-[#217346]">Sheet2</button>
        <button className="mt-[2px] ml-[2px] w-[85px] bg-[#00b050] pb-px text-black">Input Data</button>
        <span className="mt-[2px] ml-[2px] flex items-center divide-x divide-[#999] border-x border-[#999]">
          {[["Target", "w-[64px]"], ["Customer", "w-[83px]"], ["Detail1", "w-[68px]"], ["Sheet1", "w-[63px]"]].map(([n, w]) => (
            <button key={n} className={`h-5 ${w}`}>{n}</button>
          ))}
        </span>
      </nav>
      <Btn label="New sheet" className="ml-[33px] h-[27px] w-4">
        <svg width="16" height="16" viewBox="0 0 16 16" fill="none" stroke="#777"><circle cx="8" cy="8" r="7.300" /><path d="M8 4v8M4 8h8" strokeWidth="1.600" /></svg>
      </Btn>
      <span className="ml-auto flex h-[27px] w-[2px] flex-col justify-center gap-[2px]">
        <i className="h-[2px] bg-[#aaa]" /><i className="h-[2px] bg-[#aaa]" /><i className="h-[2px] bg-[#aaa]" />
      </span>
      <div className="mt-[6px] ml-[15px] mr-[22px] flex h-[15px] w-[38%] items-stretch">
        <Btn label="Scroll left" className="w-[15px] border border-[#999] bg-white"><svg width="4" height="8"><path d="M4 0v8L0 4z" fill="#222" /></svg></Btn>
        <div className="w-[19px] bg-[#f3f3f3]" />
        <div className="flex-1 border border-[#999] bg-white" />
        <Btn label="Scroll right" className="w-[15px] border border-[#999] bg-white"><svg width="4" height="8"><path d="M0 0v8l4-4z" fill="#222" /></svg></Btn>
      </div>
    </div>
  );
}

function StatusBar() {
  return (
    <div className="flex h-[21px] items-center bg-[#f3f3f3] text-[11px] text-[#333]">
      <span className="ml-[11px]">Ready</span>
      <button className="ml-[18px] flex items-center gap-[3px] font-semibold">
        <svg width="16" height="14" viewBox="0 0 16 14" fill="none" stroke="#555" strokeWidth="1.300"><path d="M5 1a6 6 0 0 0 0 11M7 1v4M4 5h9M9 5L6 12M9 8l5 6M14 8l-6 6" /></svg>
        Accessibility: Investigate
      </button>
      <div className="ml-auto flex h-full items-center">
        <Btn label="Normal view" className="h-full w-10 bg-[#c6c6c6]"><svg width="14" height="13" fill="none" stroke="#666"><path d="M.5.500h13v12H.5zM4.500 0v13M9.500 0v13M0 4.500h14M0 8.500h14" /></svg></Btn>
        <Btn label="Page layout view" className="h-full w-10"><svg width="14" height="13" fill="none" stroke="#666"><path d="M.5.500h13v12H.5zM3.500 2.500h7v8h-7zM5 4.500h4M5 6.500h4M5 8.500h4" /></svg></Btn>
        <Btn label="Page break view" className="h-full w-10"><svg width="14" height="13" fill="none" stroke="#666"><path d="M.5.500h13v12H.5zM.5 7.500h9V.500M5.500.500v7" /></svg></Btn>
        <Btn label="Zoom out" className="ml-1 w-[10px]"><svg width="8" height="2"><path d="M0 1h8" stroke="#333" strokeWidth="1.500" /></svg></Btn>
        <svg width="101" height="12" className="ml-1"><path d="M0 6.500h101M50.500 3v7" stroke="#333" /><path d="M38 0h5v12h-5z" fill="#444" /></svg>
        <Btn label="Zoom in" className="ml-[3px] w-[10px]"><svg width="9" height="9"><path d="M0 4.500h9M4.500 0v9" stroke="#333" /></svg></Btn>
        <span className="ml-3 mr-2">80%</span>
      </div>
    </div>
  );
}

/* ---------- taskbar ---------- */

function Taskbar() {
  return (
    <footer className="flex h-10 shrink-0 items-stretch bg-linear-to-r from-[#213743] via-[#20333f] to-[#1b2440] text-white">
      <Btn label="Start" className="w-12"><svg width="16" height="16" fill="#fff"><path d="M0 2l7-1v6.500H0zM8 1l8-1v7.500H8zM0 8.500h7V15l-7-1zM8 8.500h8V16l-8-1z" /></svg></Btn>
      <label className="flex w-72 items-center gap-[11px] border border-[#b8b8b8] bg-[#f3f3f3] pl-3 text-[#333]">
        <svg width="16" height="17" viewBox="0 0 16 17" fill="none" stroke="#222" strokeWidth="1.300"><circle cx="10" cy="6" r="5" /><path d="M6.500 10L1 16" /></svg>
        <input aria-label="Search" placeholder="Type here to search" className="w-56 bg-transparent text-sm outline-none placeholder:text-[#444]" />
      </label>
      <Btn label="Cortana" className="w-12"><svg width="16" height="16" fill="none" stroke="#fff" strokeWidth="2"><circle cx="8" cy="8" r="6.500" /></svg></Btn>
      <Btn label="Task view" className="w-12"><svg width="17" height="15" fill="none" stroke="#fff"><path d="M.5 0v2.500h10V0M.5 5.500h10v5H.5zM.5 15v-2.500h10V15M14.500 0v4M14.500 9v6" /><path d="M13 5h3v3h-3z" fill="#fff" /></svg></Btn>
      <div className="ml-[7px] flex">
        <Btn label="Edge" className="mr-[9px] w-10 border-b-2 border-[#56a8e8] pt-[2px]">
          <svg width="24" height="24" viewBox="0 0 24 24"><circle cx="12" cy="12" r="11.500" fill="#1a6fb5" /><path d="M1 10C3-3 23-3 23.500 11c0 4-4 6-8 4 2-6-8-9-14.500-5z" fill="#4fc79a" /><path d="M1 10c5-3 10-1 9 3-2 5 3 9 9 7-6 6-16 4-18-6z" fill="#2b8fd6" /><circle cx="6" cy="18" r="5.500" fill="#cfcfcf" /><circle cx="6" cy="16.500" r="1.800" fill="#666" /><path d="M2.500 21.500c1-4 6-4 7 0z" fill="#666" /></svg>
        </Btn>
        <Btn label="File Explorer" className="mr-[9px] w-10 border-b-2 border-[#56a8e8] pt-[2px]">
          <svg width="24" height="20" viewBox="0 0 24 20"><path d="M1 1h9l2 2h10v4H1z" fill="#e08a1e" /><path d="M1 5h22v14H1z" fill="#fbc954" /><path d="M5 19v-6h14v6h-4v-3H9v3z" fill="#3f8fe0" /></svg>
        </Btn>
        <Btn label="Store" className="mr-[9px] w-10">
          <svg width="24" height="24" viewBox="0 0 24 24"><path d="M7 6V2h10v4" fill="none" stroke="#56a8e8" strokeWidth="2" /><path d="M1 5h22v16q0 2-2 2H3q-2 0-2-2z" fill="#fff" /><path d="M7 9h4v4H7z" fill="#e04a2c" /><path d="M13 9h4v4h-4z" fill="#8a7a1e" /><path d="M7 15h4v4H7z" fill="#3f8fe0" /><path d="M13 15h4v4h-4z" fill="#f0b41e" /></svg>
        </Btn>
        <Btn label="Mail" className="mr-[5px] w-10">
          <svg width="25" height="23" viewBox="0 0 25 23"><path d="M0 8L12.500 0 25 8v14H0z" fill="#1b64b0" /><path d="M2 8h21v10H2z" fill="#fff" /><path d="M0 8l12.500 8L25 8v15H0z" fill="#4aa3e8" /><path d="M0 23l12.500-10L25 23z" fill="#2f86d6" /></svg>
        </Btn>
        <Btn label="Excel" className="w-12 border-b-2 border-[#56a8e8] bg-[#4b5a66] pt-[2px]">
          <svg width="26" height="22" viewBox="0 0 26 22"><path d="M7 0h18v22H7z" fill="#2fa866" /><path d="M7 0h9v8H7z" fill="#1f8f4f" /><path d="M16 11h9v11H7v-8z" fill="#17633a" /><path d="M0 5h13v12H0z" fill="#107040" /><text x="6.500" y="15" textAnchor="middle" fontSize="10" fontWeight="700" fill="#fff">X</text></svg>
        </Btn>
      </div>
      <div className="ml-auto flex items-center">
        <button className="flex items-center gap-[9px] text-sm">
          <svg width="24" height="24" viewBox="0 0 24 24" className="overflow-visible"><circle cx="11" cy="13" r="10" fill="#f09a28" /><path d="M10 20a3.500 3.500 0 0 1 2-6 5 5 0 0 1 8 0 3 3 0 0 1 1 6z" fill="#bfe0f5" /><circle cx="17" cy="6" r="6" fill="#d8321e" /><text x="17" y="9.500" fontSize="10" textAnchor="middle" fill="#fff">1</text></svg>
          <span>17°C</span>
          <span dir="rtl" className="font-['DejaVu_Sans',sans-serif] text-sm whitespace-nowrap">مشمس غالبًا</span>
        </button>
        <Btn label="Hidden icons" className="ml-4 w-3"><svg width="12" height="8"><path d="M1 7l5-5 5 5" stroke="#fff" fill="none" strokeWidth="1.400" /></svg></Btn>
        <Btn label="Meet now" className="ml-3 w-3"><svg width="12" height="16" fill="none" stroke="#fff"><path d="M2 2c2-1.800 6-1.800 8 0M2 14c2 1.800 6 1.800 8 0M.5 4.500h7v7h-7zM7.500 7L11 5v6L7.500 9" /></svg></Btn>
        <Btn label="Sync" className="ml-[10px] w-4"><svg width="16" height="16" fill="none" stroke="#fff"><path d="M.5 2.500L14.500.500v14H.500zM5 9V6h4M9 6v4H6" /><circle cx="13" cy="13" r="3.500" fill="#e02020" stroke="none" /></svg></Btn>
        <Btn label="Battery" className="ml-2 w-4"><svg width="16" height="13" fill="none" stroke="#fff"><path d="M4.500 3.500h10v7h-10zM15.500 5v4M1 0v3M4 0v3M.5 3.500h4v2l-2 1.500v5" /><path d="M7 5h6v4H7z" fill="#fff" /></svg></Btn>
        <Btn label="Network" className="ml-[10px] w-[14px]"><svg width="14" height="14" fill="none" stroke="#fff"><path d="M1 13C1 6 6 1 13 1M4.500 13C4.500 8 8 4.500 13 4.500M8 13c0-3 2-5 5-5" /><circle cx="12" cy="12" r="1.500" fill="#fff" stroke="none" /></svg></Btn>
        <Btn label="Volume" className="ml-2 w-[17px]"><svg width="17" height="14" fill="none" stroke="#fff"><path d="M.5 4.500h3l3.500-4v13l-3.500-4h-3zM9 5c1 1 1 3 0 4M11.500 3c2 2 2 6 0 8M14 1c3 3 3 9 0 12" /></svg></Btn>
        <button className="ml-[9px] text-xs">ENG</button>
        <button className="ml-2 w-[60px] text-center text-xs leading-[18px]">10:21 AM<br />12/16/2025</button>
        <Btn label="Notifications" className="ml-[14px] mr-[11px]">
          <svg width="26" height="28" viewBox="0 0 26 28"><path d="M0 3h17v13H5l-3 3v-3H0z" fill="#fff" /><path d="M3 6.500h11M3 9.500h11M3 12.500h8" stroke="#1b2440" /><circle cx="16" cy="18" r="8" fill="#3a3f4a" stroke="#888" /><text x="16" y="22" fontSize="11" textAnchor="middle" fill="#fff">3</text></svg>
        </Btn>
        <span className="h-10 w-[5px] border-l border-[#6b7380]" />
      </div>
    </footer>
  );
}

function Watermark() {
  return (
    <div className="pointer-events-none absolute bottom-[15px] left-[845px] opacity-40">
      <svg width="230" height="115" viewBox="845 950 230 115" fill="none" stroke="#bdbdbd" strokeWidth="12" strokeLinecap="round">
        <path d="M884 958v40a17 17 0 1 1-18-16M884 1007.500h172" />
        <circle cx="921.500" cy="991" r="15" /><circle cx="1053" cy="998" r="15.500" />
        <path d="M963 990l-3 16M984 990l-3 16M1001 986l-4 20M1017 984l-4 22" strokeWidth="11" />
        <g fill="#bdbdbd" stroke="none"><circle cx="913.500" cy="959" r="7" /><circle cx="930" cy="959" r="7" /><circle cx="954" cy="973" r="7" /><circle cx="971" cy="973" r="7" />
          <text x="844" y="1050" className="font-['Liberation_Sans',sans-serif] text-[37px] font-bold">mostaql.com</text>
        </g>
      </svg>
    </div>
  );
}

export default function App() {
  return (
    <div className={`relative flex h-screen flex-col overflow-hidden ${UI}`}>
      <TitleBar />
      <Tabs />
      <Ribbon />
      <FormulaBar />
      <Sheet />
      <SheetTabs />
      <StatusBar />
      <Taskbar />
      <Watermark />
    </div>
  );
}
